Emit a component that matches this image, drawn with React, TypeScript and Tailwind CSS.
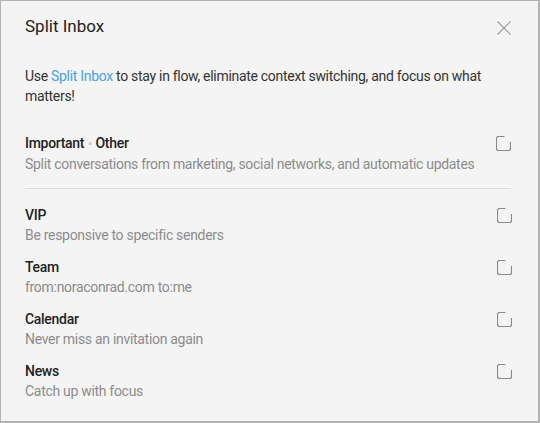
import React from 'react'

const rows = [
    { title: 'VIP', desc: 'Be responsive to specific senders' },
    { title: 'Team', desc: 'from:noraconrad.com to:me' },
    { title: 'Calendar', desc: 'Never miss an invitation again' },
    { title: 'News', desc: 'Catch up with focus' },
]

function CheckIcon() {
    return (
        <svg width="15" height="15" viewBox="0 0 15 15" fill="none" className="text-[#8a8a8a]">
            <path d="M8.5 0.5H2.5a2 2 0 0 0-2 2v10a2 2 0 0 0 2 2h10a2 2 0 0 0 2-2V6" stroke="currentColor" strokeWidth="1.2" />
        </svg>
    )
}

function CloseIcon() {
    return (
        <svg width="14" height="14" viewBox="0 0 14 14" fill="none" className="text-[#9a9a9a]">
            <path d="M0.5 0.5l13 13M13.5 0.5l-13 13" stroke="currentColor" strokeWidth="1.1" />
        </svg>
    )
}

function Row({ title, desc }: { title: React.ReactNode; desc: string }) {
    return (
        <div className="flex items-start justify-between">
            <div className="flex flex-col whitespace-nowrap">
                <div className="text-[14px] leading-[20px] font-medium text-[#222]">{title}</div>
                <div className="text-[14px] leading-[20px] text-[#8c8c8c]">{desc}</div>
            </div>
            <div className="pt-[3px]">
                <CheckIcon />
            </div>
        </div>
    )
}

export default function App() {
    return (
        <div
            className="w-[540px] h-[423px] bg-[#f4f4f4] border-t border-l border-r-2 border-b-2 border-[#b3b3b3] pl-[24px] pr-[26px] pt-[14px] overflow-hidden tracking-[-0.3px]"
            style={{ fontFamily: 'Roboto, "Liberation Sans", sans-serif' }}
        >
            {/* Header */}
            <div className="flex items-center justify-between h-[24px]">
                <h1 className="text-[17px] text-[#222] font-normal tracking-normal">Split Inbox</h1>
                <button className="mr-[1px] mt-[2px]">
                    <CloseIcon />
                </button>
            </div>

            {/* Intro, broken where the reference breaks it */}
            <div className="mt-[27px] text-[14px] leading-[20px] text-[#333] whitespace-nowrap">
                <div>
                    <span>Use </span>
                    <span className="text-[#4aa3df]">Split Inbox</span>
                    <span> to stay in flow, eliminate context switching, and focus on what</span>
                </div>
                <div>matters!</div>
            </div>

            <div className="mt-[27px] pb-[14px] border-b border-[#dcdcdc] mr-[1px]">
                <Row
                    title={
                        <span>
                            Important <span className="text-[#c8c8c8] text-[12px] align-middle mx-[0.5px]">•</span> Other
                        </span>
                    }
                    desc="Split conversations from marketing, social networks, and automatic updates"
                />
            </div>

            <div className="mt-[16px] flex flex-col gap-[12px]">
                {rows.map((r) => (
                    <Row key={r.title} title={r.title} desc={r.desc} />
                ))}
            </div>
        </div>
    )
}
